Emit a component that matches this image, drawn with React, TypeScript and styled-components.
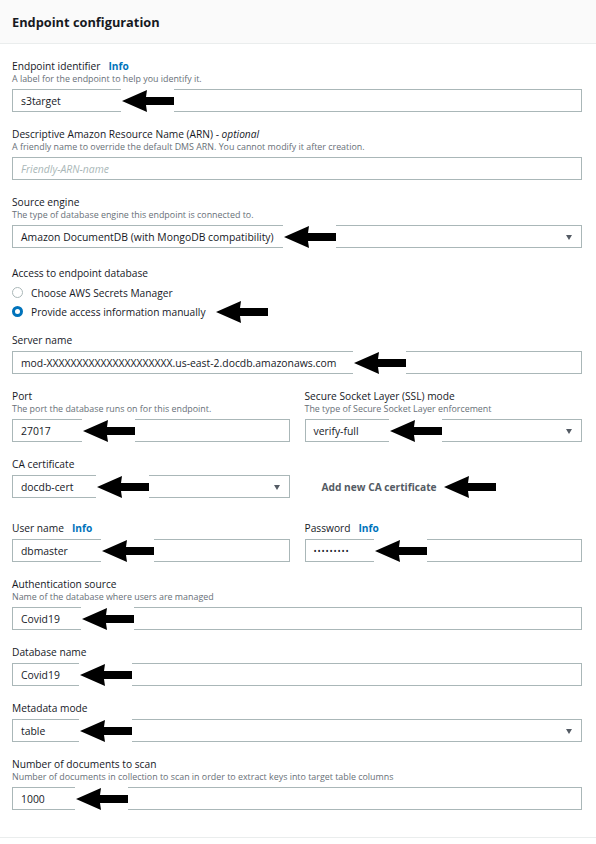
import React from 'react';
import styled, { createGlobalStyle } from 'styled-components';

const GlobalStyle = createGlobalStyle`
  html, body {
    margin: 0;
    padding: 0;
    background: #ffffff;
  }
  body {
    font-family: 'Open Sans', 'Noto Sans', Arial, sans-serif;
    color: #16191f;
  }
`;

type ArrowProps = { left: number; top?: number };

function Arrow({ left, top = 0 }: ArrowProps) {
  return (
    <StyledArrow $left={left} $top={top} width="53" height="24" viewBox="0 0 53 24">
      <rect width="53" height="24" fill="#ffffff" />
      <path d="M1 12 L26 1 L25 8 L53 8 L53 16 L25 16 L26 23 Z" fill="#000000" />
    </StyledArrow>
  );
}

type FieldProps = {
  label: string;
  info?: boolean;
  optional?: boolean;
  description?: string;
  children: React.ReactNode;
};

function Field({ label, info, optional, description, children }: FieldProps) {
  return (
    <StyledField>
      <StyledLabel>
        {label}
        {optional && (
          <>
            {' - '}
            <em>optional</em>
          </>
        )}
        {info && <StyledInfo>Info</StyledInfo>}
      </StyledLabel>
      {description && <StyledDescription>{description}</StyledDescription>}
      <StyledControlSlot>{children}</StyledControlSlot>
    </StyledField>
  );
}

type InputProps = {
  value?: string;
  placeholder?: string;
  select?: boolean;
  password?: boolean;
  arrow?: number;
};

function Input({ value, placeholder, select, password, arrow }: InputProps) {
  return (
    <StyledInput>
      {value ? (
        password ? <StyledDots>{value}</StyledDots> : <StyledValue>{value}</StyledValue>
      ) : (
        <StyledPlaceholder>{placeholder}</StyledPlaceholder>
      )}
      {select && <StyledCaret />}
      {arrow !== undefined && <Arrow left={arrow} />}
    </StyledInput>
  );
}

function App() {
  return (
    <>
      <GlobalStyle />
      <StyledPanel>
        <StyledHeader>
          <StyledTitle>Endpoint configuration</StyledTitle>
        </StyledHeader>
        <StyledBody>
          <Field label="Endpoint identifier" info description="A label for the endpoint to help you identify it.">
            <Input value="s3target" arrow={108} />
          </Field>

          <Field
            label="Descriptive Amazon Resource Name (ARN)"
            optional
            description="A friendly name to override the default DMS ARN. You cannot modify it after creation."
          >
            <Input placeholder="Friendly-ARN-name" />
          </Field>

          <Field label="Source engine" description="The type of database engine this endpoint is connected to.">
            <Input value="Amazon DocumentDB (with MongoDB compatibility)" select arrow={270} />
          </Field>

          <StyledRadioField>
            <StyledLabel>Access to endpoint database</StyledLabel>
            <StyledRadioList>
              <StyledRadioRow>
                <StyledRadio $checked={false} />
                Choose AWS Secrets Manager
              </StyledRadioRow>
              <StyledRadioRow>
                <StyledRadio $checked />
                Provide access information manually
                <Arrow left={203} />
              </StyledRadioRow>
            </StyledRadioList>
          </StyledRadioField>

          <Field label="Server name">
            <Input value="mod-XXXXXXXXXXXXXXXXXXXXX.us-east-2.docdb.amazonaws.com" arrow={340} />
          </Field>

          <StyledRow>
            <Field label="Port" description="The port the database runs on for this endpoint.">
              <Input value="27017" arrow={69} />
            </Field>
            <Field label="Secure Socket Layer (SSL) mode" description="The type of Secure Socket Layer enforcement">
              <Input value="verify-full" select arrow={83} />
            </Field>
          </StyledRow>

          <StyledRow $extraBottom={8}>
            <Field label="CA certificate">
              <Input value="docdb-cert" select arrow={83} />
            </Field>
            <StyledLinkCell>
              Add new CA certificate
              <Arrow left={138} />
            </StyledLinkCell>
          </StyledRow>

          <StyledRow>
            <Field label="User name" info>
              <Input value="dbmaster" arrow={88} />
            </Field>
            <Field label="Password" info>
              <Input value="•••••••••" password arrow={68} />
            </Field>
          </StyledRow>

          <Field label="Authentication source" description="Name of the database where users are managed">
            <Input value="Covid19" arrow={68} />
          </Field>

          <Field label="Database name">
            <Input value="Covid19" arrow={66} />
          </Field>

          <Field label="Metadata mode">
            <Input value="table" select arrow={66} />
          </Field>

          <Field
            label="Number of documents to scan"
            description="Number of documents in collection to scan in order to extract keys into target table columns"
          >
            <Input value="1000" arrow={62} />
          </Field>
        </StyledBody>
      </StyledPanel>
    </>
  );
}

export default App;

const StyledPanel = styled.div`
  width: 596px;
  background: #ffffff;
`;

const StyledHeader = styled.div`
  display: flex;
  align-items: center;
  height: 43px;
  padding: 0 12px;
  background: #fafafa;
  border-bottom: 1px solid #eaeded;
`;

const StyledTitle = styled.h2`
  margin: 0;
  font-size: 12.8px;
  font-weight: 700;
  color: #16191f;
`;

const StyledBody = styled.div`
  display: flex;
  flex-direction: column;
  gap: 15px;
  padding: 15px 14px 27px 12px;
  border-bottom: 1px solid #eaeded;
`;

const StyledField = styled.div`
  display: flex;
  flex-direction: column;
  min-width: 0;
`;

const StyledLabel = styled.div`
  font-size: 10.2px;
  line-height: 14px;
  color: #16191f;
  white-space: nowrap;

  em {
    font-style: italic;
  }
`;

const StyledInfo = styled.span`
  margin-left: 8px;
  font-weight: 700;
  color: #0073bb;
`;

const StyledDescription = styled.div`
  font-size: 8.9px;
  line-height: 12px;
  color: #687078;
  white-space: nowrap;
`;

const StyledControlSlot = styled.div`
  margin-top: 4px;
`;

const StyledInput = styled.div`
  position: relative;
  display: flex;
  align-items: center;
  box-sizing: border-box;
  height: 23px;
  padding: 0 8px;
  border: 1px solid #aab7b8;
  background: #ffffff;
`;

const StyledValue = styled.span`
  font-size: 10.4px;
  color: #16191f;
  white-space: nowrap;
`;

const StyledDots = styled.span`
  font-size: 8.5px;
  letter-spacing: 0.8px;
  color: #16191f;
`;

const StyledPlaceholder = styled.span`
  font-size: 10.4px;
  font-style: italic;
  color: #aab7b8;
`;

const StyledCaret = styled.span`
  position: absolute;
  right: 9px;
  top: 50%;
  margin-top: -2px;
  width: 0;
  height: 0;
  border-left: 3.5px solid transparent;
  border-right: 3.5px solid transparent;
  border-top: 5px solid #545b64;
`;

const StyledArrow = styled.svg<{ $left: number; $top: number }>`
  position: absolute;
  left: ${(p) => p.$left}px;
  top: 50%;
  margin-top: ${(p) => p.$top - 12}px;
  display: block;
`;

const StyledRadioField = styled.div`
  display: flex;
  flex-direction: column;
  margin-top: 3px;
  margin-bottom: -3px;
`;

const StyledRadioList = styled.div`
  display: flex;
  flex-direction: column;
  margin-top: 3px;
`;

const StyledRadioRow = styled.div`
  position: relative;
  display: flex;
  align-items: center;
  gap: 8px;
  height: 19px;
  font-size: 10.2px;
  color: #16191f;
`;

const StyledRadio = styled.span<{ $checked: boolean }>`
  box-sizing: border-box;
  width: 11px;
  height: 11px;
  border-radius: 50%;
  border: ${(p) => (p.$checked ? '3.5px solid #0073bb' : '1px solid #aab7b8')};
  background: #ffffff;
`;

const StyledRow = styled.div<{ $extraBottom?: number }>`
  display: grid;
  grid-template-columns: 1fr 1fr;
  column-gap: 15px;
  align-items: end;
  margin-bottom: ${(p) => p.$extraBottom ?? 0}px;
`;

const StyledLinkCell = styled.div`
  position: relative;
  display: flex;
  align-items: center;
  height: 23px;
  padding-left: 17px;
  font-size: 10.2px;
  font-weight: 700;
  color: #545b64;
`;
